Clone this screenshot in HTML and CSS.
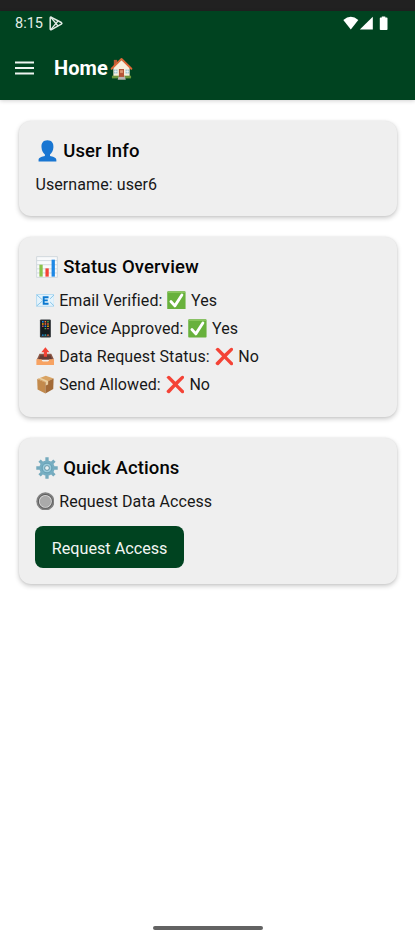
FILE: index.html
```html
<!DOCTYPE html>
<html lang="en">
<head>
<meta charset="utf-8">
<title>Home</title>
<link rel="stylesheet" href="styles.css">
</head>
<body>
<div class="strip"></div>
<header class="top">
  <div class="status">
    <span class="time">8:15</span>
    <svg class="play" viewBox="0 0 14 15" fill="none" stroke="#e4ede7" stroke-width="1.5" stroke-linejoin="round"><path d="M1.2 2Q1.2.7 2.5 1.3L12.3 6.5Q13.5 7.3 12.3 8.2L2.5 13.6Q1.2 14.2 1.2 12.8Z"/><path stroke-width="1.3" d="M2 1.5 9 10M2 13.4 9 5"/></svg>
    <svg class="signals" viewBox="0 0 46 15" fill="#fff"><path d="M.3 4Q7.800-2.500 15.300 4L7.800 13.500Z"/><path d="M29.800 .8V13.500H16.800Z"/><path d="M36.800 2.300Q36.800 1.600 37.500 1.600H38.800V.4H42.300V1.600H43.800Q44.500 1.600 44.500 2.300V13.200Q44.500 14 43.700 14H37.600Q36.800 14 36.800 13.200Z"/></svg>
  </div>
  <div class="appbar">
    <svg class="menu" viewBox="0 0 19 14" fill="#eef4f0"><path d="M0 .5h19v2H0zM0 6h19v2H0zM0 11.5h19v2H0z"/></svg>
    <h1>Home</h1>
    <svg class="house" viewBox="0 0 24 24"><path fill="#b95a35" d="M4 3h3.5v7H4z"/><path fill="#f8eedb" d="M3.5 11 12 3l8.5 8v10h-17z"/><path fill="#6c963c" d="M2 19.5h20v2.8H2z"/><path fill="#b8b3b0" d="M9 20h6.5l1 3.8H8z"/><path fill="#b65438" d="M9.3 12.5h5.3v8.3H9.3z"/><path fill="#dc936f" d="M10.5 13.8h3v2.8h-3z"/><path fill="#9bc3cf" d="M4.3 13h3.5v4.3H4.3zM16.2 13h3.5v4.3h-3.5z"/><path stroke="#fff" stroke-width=".6" d="M6 13v4.3M18 13v4.3M4.3 15.1h3.5M16.2 15.1h3.5"/><path fill="none" stroke="#df6938" stroke-width="2" stroke-linecap="round" stroke-linejoin="round" d="M1.7 12.3 12 2l10.3 10.3"/></svg>
  </div>
</header>
<main>
  <section class="card user">
    <h2><svg viewBox="0 0 24 24" fill="#1976d2"><path d="M12.5 .3c4.700 0 6.700 3 6.500 7.600-.2 4-2 6.600-3.700 7.800v1.800c2.700.8 6.900 1.300 6.900 4.300v1.700H2.800v-1.700c0-3 4.200-3.500 6.900-4.300v-1.800C8 14.500 6.200 11.900 6 7.900 5.800 3.300 7.800.3 12.500.3Z"/></svg><span>User Info</span></h2>
    <p><span>Username: user6</span></p>
  </section>
  <section class="card overview">
    <h2><svg viewBox="0 0 24 24"><path fill="#f9fafb" stroke="#c4ced3" stroke-width=".8" d="M.7.7h22.600v22.600H.7z"/><path stroke="#cfd8dc" d="M1 5h22M1 9.500h22M1 14h22M1 18.500h22"/><path fill="#8bc34a" d="M3.700 9.500h3.600v13H3.700z"/><path fill="#f44336" d="M10.300 13.500h3.600v9h-3.600z"/><path fill="#1e88e5" d="M17 4h3.600v18.500H17z"/></svg><span>Status Overview</span></h2>
    <p><svg viewBox="0 0 24 24"><path fill="#e4f3fc" stroke="#a7d5ef" d="M.7 4.500h22.600v15H.7z"/><path fill="none" stroke="#70b9e3" d="m1 5 8 7-8 7M23 5l-7 7 7 7"/><path fill="#e4f3fc" d="M8 6h10v12H8z"/><path fill="none" stroke="#0b78cf" stroke-width="2.400" d="M16 8H9.800v8.200H16M9.800 12H15"/></svg><span>Email Verified:</span><svg viewBox="0 0 24 24"><use href="#yes"/></svg><span>Yes</span></p>
    <p><svg viewBox="0 0 24 24"><rect x="5" y=".5" width="14" height="23" rx="1.500" fill="#34383c"/><path fill="#151b20" d="M6.300 2h11.400v19H6.300z"/><path stroke="#2196f3" stroke-width="1.700" d="M7.700 3.500h2M11 9.300h2M7.700 20.500h2"/><path stroke="#ff7043" stroke-width="1.700" d="M11 3.500h2M14.300 6.400h2M11 6.400h2M14.300 20.500h2"/><path stroke="#4caf50" stroke-width="1.700" d="M14.300 3.500h2M11 12.200h2"/><path stroke="#ffb300" stroke-width="1.700" d="M7.700 6.400h2M14.300 9.300h2"/><path stroke="#c75162" stroke-width="1.700" d="M7.700 9.300h2M14.300 12.200h2"/><path stroke="#26b6c8" stroke-width="1.700" d="M11 20.500h2"/></svg><span>Device Approved:</span><svg viewBox="0 0 24 24"><use href="#yes"/></svg><span>Yes</span></p>
    <p><svg viewBox="0 0 24 24"><path fill="#8b5746" d="M4.500 8.500h15L23 16H1z"/><path fill="#653c35" d="M5.500 10.500h13l2 5.500h-17z"/><path fill="#f7a363" d="M.5 15.500H7q.5 3 2 3h6q1.500 0 2-3h6.500v7.500H.5z"/><path fill="#f44336" d="m12 .2 5.200 6.600H14V12.500h-4V6.800H6.800z"/></svg><span>Data Request Status:</span><svg viewBox="0 0 24 24"><use href="#no"/></svg><span>No</span></p>
    <p><svg viewBox="0 0 24 24"><path fill="#d9a363" d="m1.500 5 11-4 10 3.500L12 10z"/><path fill="#c38a4c" d="M1.500 5 12 9.500v14L2 18.500z"/><path fill="#a36b38" d="m12 9.500 10.500-5-.5 13.500-10 5.500z"/><path fill="#ead0a2" d="m5.500 3.500 10 4.200v4.300l-3 1.500V9L3.200 4.500z"/></svg><span>Send Allowed:</span><svg viewBox="0 0 24 24"><use href="#no"/></svg><span>No</span></p>
  </section>
  <section class="card actions">
    <h2><svg viewBox="0 0 24 24"><g stroke="#75aabd" stroke-width="3.600"><path d="M12 .3v23.400M.3 12h23.400M3.900 3.900l16.200 16.200M20.100 3.900 3.900 20.100"/></g><circle cx="12" cy="12" r="8.300" fill="#76aec2"/><circle cx="12" cy="12" r="5.300" fill="#9bcbdc" stroke="#5e9aaf"/><circle cx="12" cy="12" r="2.600" fill="#e9f1f3" stroke="#5e91a2"/></svg><span>Quick Actions</span></h2>
    <p><svg viewBox="0 0 24 24"><circle cx="12" cy="12" r="11.600" fill="#828282"/><circle cx="12" cy="12" r="9.500" fill="#5c5c5c"/><circle cx="12" cy="12" r="8.200" fill="#dedede"/><circle cx="12" cy="12" r="7.200" fill="#aaa"/></svg><span>Request Data Access</span></p>
    <button type="button">Request Access</button>
  </section>
</main>
<footer><div class="handle"></div></footer>
<svg class="defs" viewBox="0 0 24 24">
  <defs>
    <g id="yes"><rect x=".3" y=".3" width="23.400" height="23.400" rx="1" fill="#68b13c"/><path d="M1 1h22v1.500H1z" fill="#8ac75e"/><path fill="none" stroke="#fff" stroke-width="3.600" stroke-linecap="round" stroke-linejoin="round" d="m5 13.500 5 5.500L19 5"/></g>
    <path id="no" fill="#f44336" d="M.6 3.200Q3-.3 5 1.600L12 8.600 19.500 1.500Q21.800.2 23 2.200 23.700 3.200 22.500 4.500L15 12l8 8Q24 21.500 22.300 23 21 24 19.500 22.700L12 15 5 22.600Q3.200 24 1.500 22.500 0 21 1.500 19.500L9 11.800Z"/>
  </defs>
</svg>
</body>
</html>
```
FILE: styles.css
```css
* { box-sizing: border-box; }
body { margin: 0; height: 935px; overflow: hidden; display: flex; flex-direction: column; background: #fff; color: #050505; font-family: Roboto, sans-serif; }
h1, h2, p { margin: 0; }
svg { display: block; flex: none; }
.strip { height: 11px; background: #212121; }
.top { height: 89px; background: #004320; color: #fff; box-shadow: 0 1px 4px rgba(0,0,0,.18); }
.status { height: 24px; display: flex; align-items: center; padding: 0 26px 0 15px; }
.time { font-size: 14.5px; color: #e4ede7; width: 33.5px; }
.play { width: 14px; height: 15px; }
.signals { width: 46px; height: 15px; margin-left: auto; }
.appbar { height: 66px; display: flex; align-items: center; padding-left: 14.5px; }
.menu { width: 19px; height: 14px; }
h1 { font-size: 20px; line-height: 24px; font-weight: 700; margin-left: 20.5px; width: 56px; letter-spacing: .1px; white-space: nowrap; }
.house { width: 23px; height: 23px; }
main { flex: 1; padding: 21px 18.5px 0 19px; display: flex; flex-direction: column; gap: 21px; }
.card { padding: 17px 16.5px; background: #efefef; border-radius: 12px; box-shadow: 0 2px 5px rgba(0,0,0,.22), 0 0 2px rgba(0,0,0,.08); }
.user { height: 95px; }
.overview { height: 180px; }
.actions { height: 146px; }
h2 { height: 26px; display: flex; align-items: center; font-size: 18.5px; font-weight: 500; letter-spacing: .12px; white-space: nowrap; }
h2 svg { width: 22px; height: 22px; margin-right: 5.7px; }
h2 + p { margin-top: 6px; }
p { height: 28.1px; display: flex; align-items: center; gap: 4.9px; font-size: 16px; letter-spacing: .08px; color: #181818; white-space: nowrap; }
p svg { width: 18.8px; height: 18.8px; }
button { display: block; width: 149px; height: 42px; margin: 11px 0 0; padding: 2px 0 0; border: 0; border-radius: 8px; background: #004320; color: #f2f6f3; font: 400 16.2px Roboto, sans-serif; }
.actions button { margin-left: -.4px; }
footer { height: 9px; display: flex; justify-content: center; }
.handle { width: 110px; height: 4px; border-radius: 2px; background: #636363; }
.defs { position: absolute; width: 0; height: 0; }
```
